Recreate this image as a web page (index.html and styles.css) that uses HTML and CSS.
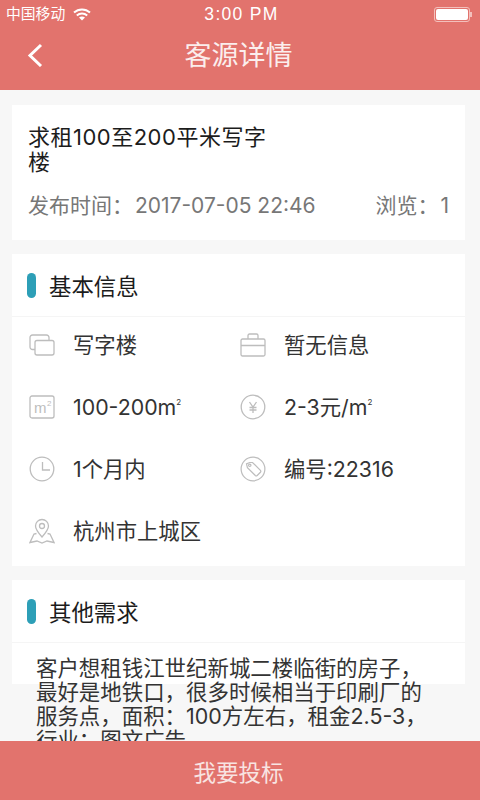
FILE: index.html
```html
<!DOCTYPE html>
<html lang="zh-CN">
<head>
<meta charset="utf-8">
<title>客源详情</title>
<link rel="stylesheet" href="styles.css">
</head>
<body>
<div class="phone">
  <header class="top">
    <div class="status">
      <div class="status-left">
        <span class="carrier">中国移动</span>
        <svg class="wifi" viewBox="0 0 18 13" width="18" height="13"><path d="M1 4.6C5.6.4 12.4.4 17 4.6M3.8 7.4c3-2.7 7.4-2.7 10.4 0" fill="none" stroke="#fff" stroke-width="2"/><path d="M6 9.6c1.800-1.400 4.200-1.400 6 0l-3 3z" fill="#fff"/></svg>
      </div>
      <span class="clock">3:00 PM</span>
      <div class="battery"><span class="battery-body"><span class="battery-fill"></span></span><span class="battery-tip"></span></div>
    </div>
    <div class="nav">
      <svg class="back" viewBox="0 0 16 24" width="16" height="24"><path d="M14 2 3 12.500 14 23" fill="none" stroke="#fff" stroke-width="3"/></svg>
      <h1 class="title">客源详情</h1>
    </div>
  </header>

  <main class="content">
    <section class="card summary">
      <h2 class="headline">求租100至200平米写字楼</h2>
      <div class="meta"><span><span class="key">发布时间： </span>2017-07-05 22:46</span><span><span class="key">浏览： </span>1</span></div>
    </section>

    <section class="card info">
      <div class="card-head"><span class="pill"></span><span>基本信息</span></div>
      <div class="grid">
        <div class="item">
          <svg class="ico" viewBox="0 0 26 22"><path d="M6 15.500H3.500A2.500 2.500 0 0 1 1 13V3.500A2.500 2.500 0 0 1 3.500 1h14A2.500 2.500 0 0 1 20 3.500V6.500"/><rect x="6" y="6.500" width="19" height="14.500" rx="2"/></svg>
          <span class="label">写字楼</span>
        </div>
        <div class="item">
          <svg class="ico" viewBox="0 0 26 24"><rect x="1" y="6" width="24" height="17" rx="1.500"/><path d="M8 6V2.500A1.500 1.500 0 0 1 9.500 1h7A1.500 1.500 0 0 1 18 2.500V6M1 12.500h24"/></svg>
          <span class="label">暂无信息</span>
        </div>
        <div class="item">
          <svg class="ico" viewBox="0 0 26 24"><rect x="1" y="1" width="24" height="22" rx="2"/><text x="5" y="18" class="ico-text">m</text><text x="18" y="11" class="ico-sup">2</text></svg>
          <span class="label">100-200m<sup class="sq">2</sup></span>
        </div>
        <div class="item">
          <svg class="ico" viewBox="0 0 26 26"><circle cx="13" cy="13" r="11.800"/><path d="m9.500 8 3.500 5 3.500-5M13 13v6M9.500 13.500h7M9.500 16h7"/></svg>
          <span class="label">2-3元/m<sup class="sq">2</sup></span>
        </div>
        <div class="item">
          <svg class="ico" viewBox="0 0 26 26"><circle cx="13" cy="13" r="11.800"/><path d="M13.500 6v8H21"/></svg>
          <span class="label">1个月内</span>
        </div>
        <div class="item">
          <svg class="ico" viewBox="0 0 28 28"><circle cx="14" cy="14" r="12.800"/><path d="M7 8.500 10.500 7h3L22 15.500a1.500 1.500 0 0 1 0 2L18.500 21a1.500 1.500 0 0 1-2 0L8 12.500z"/><circle cx="10.500" cy="10" r="1.300"/></svg>
          <span class="label">编号:22316</span>
        </div>
        <div class="item">
          <svg class="ico" viewBox="0 0 26 26"><path d="M13 19C9 14.500 6.500 11.500 6.500 8a6.500 6.500 0 0 1 13 0c0 3.500-2.500 6.500-6.500 11z"/><circle cx="13" cy="8" r="2.500"/><path d="M7.500 15.500 5 16 1 24.500l7-1.500 5 2 5-2 7 1.500-4-8.500-2.500-.5"/></svg>
          <span class="label">杭州市上城区</span>
        </div>
      </div>
    </section>

    <section class="card other">
      <div class="card-head"><span class="pill"></span><span>其他需求</span></div>
      <p class="desc">客户想租钱江世纪新城二楼临街的房子，最好是地铁口，很多时候相当于印刷厂的服务点，面积：100方左右，租金2.5-3，行业：图文广告</p>
    </section>
  </main>

  <button class="submit" type="button">我要投标</button>
</div>
</body>
</html>
```

FILE: styles.css
```css
* { box-sizing: border-box; }
html, body { margin: 0; padding: 0; }
body {
  font-family: Inter, "Noto Sans CJK SC", sans-serif;
  background: #f7f7f7;
}
.phone {
  position: relative;
  width: 480px;
  height: 800px;
  overflow: hidden;
  background: #f7f7f7;
  display: flex;
  flex-direction: column;
}
.top {
  height: 90px;
  flex: none;
  background: #e2736d;
  color: #fff;
}
.status {
  height: 28px;
  display: grid;
  grid-template-columns: 1fr auto 1fr;
  align-items: center;
  padding: 0 8px 0 6px;
}
.status-left { display: flex; align-items: center; gap: 8px; }
.carrier { font-size: 14.800px; line-height: 28px; }
.wifi { display: block; }
.clock {
  font-family: "Liberation Sans", sans-serif;
  font-size: 17.500px;
  letter-spacing: 1.300px;
  margin-left: 5px;
}
.battery { justify-self: end; display: flex; align-items: center; }
.battery-body {
  display: block;
  width: 36px;
  height: 15px;
  padding: 1px;
  border: 1px solid #f3c0bc;
  border-radius: 3px;
}
.battery-fill { display: block; height: 100%; background: #fff; border-radius: 2px; }
.battery-tip { width: 2px; height: 5px; background: #f3c0bc; }
.nav {
  height: 54px;
  padding-right: 3px;
  display: flex;
  align-items: center;
  justify-content: center;
  position: relative;
}
.back { position: absolute; left: 27px; top: 15px; }
.title {
  margin: 0;
  padding-top: 1px;
  font-size: 27px;
  line-height: 54px;
  font-weight: 400;
  color: #fbeeed;
}
.content {
  flex: none;
  padding: 15px 12px 0 12px;
  display: flex;
  flex-direction: column;
  gap: 14px;
  width: 477px;
}
.card { background: #fff; }
.summary { height: 135px; padding: 20px 16px 0 16px; }
.headline {
  margin: 0;
  width: 242px;
  font-size: 22px;
  letter-spacing: .5px;
  line-height: 25px;
  font-weight: 400;
  color: #1c1c1c;
}
.meta {
  margin-top: 17px;
  display: flex;
  justify-content: space-between;
  font-size: 21px;
  line-height: 28px;
  color: #777;
}
.key { word-spacing: -4px; }
.info { height: 312px; }
.card-head {
  height: 63px;
  display: flex;
  align-items: center;
  gap: 13px;
  padding-left: 15px;
  font-size: 22.400px;
  color: #1c1c1c;
  border-bottom: 1px solid #f5f5f5;
}
.pill {
  width: 9px;
  height: 25px;
  border-radius: 4.500px;
  background: #2d9fb7;
}
.grid {
  display: grid;
  grid-template-columns: 211px 1fr;
  grid-auto-rows: 56px;
  row-gap: 6px;
}
.item {
  display: flex;
  align-items: center;
  font-size: 21.330px;
  color: #333;
}
.label { line-height: 28px; }
.ico {
  width: 26px;
  height: 26px;
  margin: 0 18px 0 17px;
  flex: none;
  fill: none;
  stroke: #bdbdbd;
  stroke-width: 1.300;
}
.ico-text { font-family: "Liberation Sans", sans-serif; font-size: 15px; fill: #bdbdbd; stroke: none; }
.ico-sup { font-family: "Liberation Sans", sans-serif; font-size: 8px; fill: #bdbdbd; stroke: none; }
.sq {
  position: relative;
  top: -10px;
  font-size: 8px;
  line-height: 0;
  vertical-align: baseline;
}
.other { height: 104px; }
.desc {
  margin: 0;
  padding: 13px 0 0 24px;
  width: 415px;
  font-size: 21.450px;
  line-height: 24px;
  color: #333;
}
.submit {
  position: absolute;
  left: 0;
  bottom: 0;
  width: 480px;
  height: 59px;
  border: 0;
  padding: 0 3px 0 0;
  background: #e2736d;
  color: #f8e4e2;
  font: inherit;
  font-size: 22.500px;
}
```
